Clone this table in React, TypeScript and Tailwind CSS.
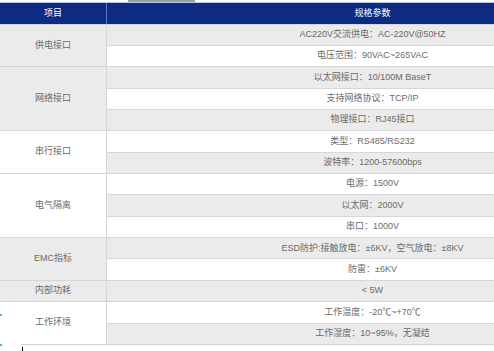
const groups = [
  { name: "供电接口", bg: "bg-[#ebebeb]", rows: ["AC220V交流供电：AC-220V@50HZ", "电压范围：90VAC~265VAC"] },
  {
    name: "网络接口",
    bg: "bg-[#ebebeb]",
    rows: ["以太网接口：10/100M BaseT", "支持网络协议：TCP/IP", "物理接口：RJ45接口"],
  },
  { name: "串行接口", bg: "bg-white", rows: ["类型：RS485/RS232", "波特率：1200-57600bps"] },
  { name: "电气隔离", bg: "bg-white", rows: ["电源：1500V", "以太网：2000V", "串口：1000V"] },
  {
    name: "EMC指标",
    bg: "bg-[#ebebeb]",
    rows: ["ESD防护:接触放电：±6KV，空气放电：±8KV", "防雷：±6KV"],
  },
  { name: "内部功耗", bg: "bg-[#ebebeb]", rows: ["< 5W"] },
  { name: "工作环境", bg: "bg-white", rows: ["工作温度：-20℃~+70℃", "工作湿度：10~95%，无凝结"] },
]

export default function App() {
  let index = 0
  return (
    <div
      className="relative h-[351px] w-[494px] overflow-hidden bg-white text-[9px] text-[#6a6a6a]"
      style={{ fontFamily: '"Liberation Sans", "Noto Sans CJK SC", sans-serif' }}
    >
      <div className="flex h-[2px]">
        <div className="ml-[128px] h-[2px] w-[67px] bg-[#9aa0ae]" />
      </div>
      <div className="w-[638px]">
        <div className="flex h-[21.5px] border-t border-[#b9c3df] bg-[#0d2b82] text-white">
          <div className="flex w-[107px] items-center justify-center border-r border-[#5d74b5]">项目</div>
          <div className="flex flex-1 items-center justify-center">规格参数</div>
        </div>
        {groups.map((g) => (
          <div key={g.name} className="flex">
            <div
              className={`flex w-[107px] shrink-0 items-center justify-center border-r border-t border-[#d6d6d6] ${g.bg}`}
            >
              {g.name}
            </div>
            <div className="flex flex-1 flex-col">
              {g.rows.map((r) => {
                const gray = index++ % 2 === 0
                return (
                  <div
                    key={r}
                    className={`flex h-[21.37px] items-center justify-center border-t border-[#d6d6d6] ${
                      gray ? "bg-[#ebebeb]" : "bg-white"
                    }`}
                  >
                    {r}
                  </div>
                )
              })}
            </div>
          </div>
        ))}
        <div className="ml-[21px] h-px bg-[#d0d0d0]" />
      </div>
      <div className="absolute left-0 top-[314px] h-[2px] w-[2px] bg-[#3fcf6a]" />
      <div className="absolute left-0 top-[344px] h-[2px] w-[2px] bg-[#3fcf6a]" />
      <div className="absolute left-[22px] top-[347px] h-[4px] w-px bg-black" />
    </div>
  )
}
